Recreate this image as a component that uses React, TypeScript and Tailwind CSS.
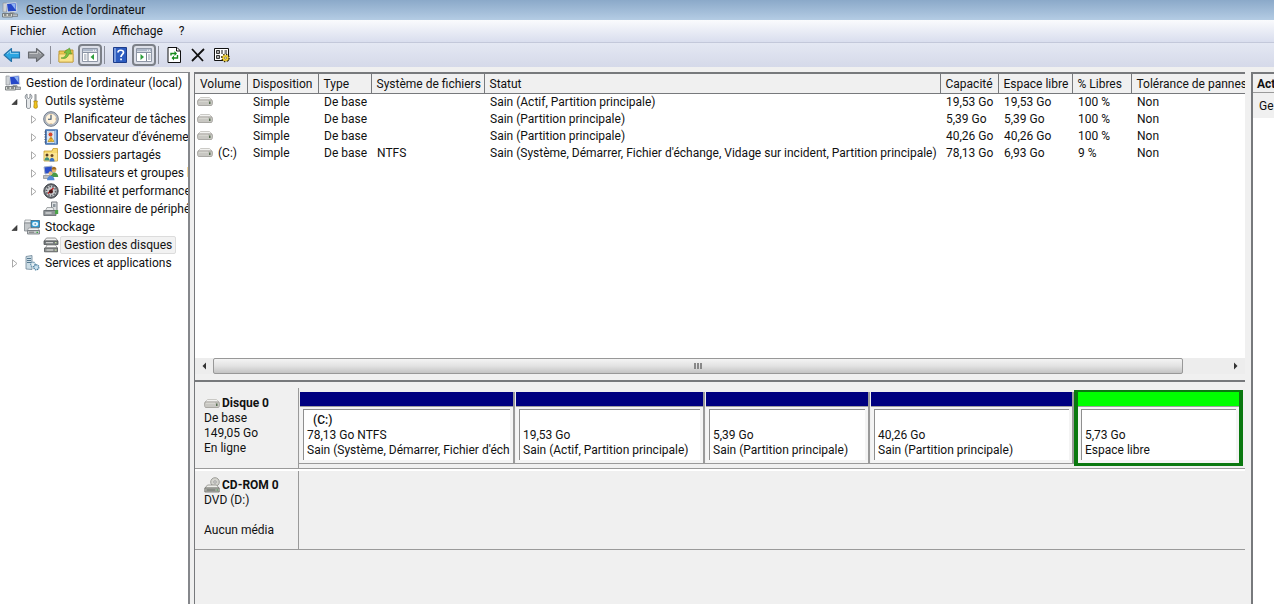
import type { ReactNode } from "react";

const volumes = [
  { name: "", fs: "", status: "Sain (Actif, Partition principale)", size: "19,53 Go", free: "19,53 Go", pct: "100 %" },
  { name: "", fs: "", status: "Sain (Partition principale)", size: "5,39 Go", free: "5,39 Go", pct: "100 %" },
  { name: "", fs: "", status: "Sain (Partition principale)", size: "40,26 Go", free: "40,26 Go", pct: "100 %" },
  {
    name: "(C:)",
    fs: "NTFS",
    status: "Sain (Système, Démarrer, Fichier d'échange, Vidage sur incident, Partition principale)",
    size: "78,13 Go",
    free: "6,93 Go",
    pct: "9 %",
  },
];

const columns = [
  { label: "Volume", width: "w-[52px]" },
  { label: "Disposition", width: "w-[71px]" },
  { label: "Type", width: "w-[53px]" },
  { label: "Système de fichiers", width: "w-[113px]" },
  { label: "Statut", width: "" },
  { label: "Capacité", width: "w-[58px]" },
  { label: "Espace libre", width: "w-[74px]" },
  { label: "% Libres", width: "w-[59px]" },
  { label: "Tolérance de pannes", width: "w-[114px]" },
];

const partitions = [
  { name: "(C:)", size: "78,13 Go NTFS", status: "Sain (Système, Démarrer, Fichier d'éch", grow: "grow-[213]" },
  { name: "", size: "19,53 Go", status: "Sain (Actif, Partition principale)", grow: "grow-[187]" },
  { name: "", size: "5,39 Go", status: "Sain (Partition principale)", grow: "grow-[162]" },
  { name: "", size: "40,26 Go", status: "Sain (Partition principale)", grow: "grow-[201]" },
];

function Icon({ children }: { children: ReactNode }) {
  return (
    <svg viewBox="0 0 16 16" className="size-4 shrink-0" aria-hidden="true">
      {children}
    </svg>
  );
}

function ComputerIcon() {
  return (
    <Icon>
      <path d="M1 1h3.500v9H1z" fill="#cfd3d6" stroke="#8d9399" strokeWidth=".7" />
      <path d="M4.500 1.500 14 .7l.8 8.600-9.300.7z" fill="#2648c8" stroke="#d5dae3" />
      <path d="m9 1.700 4.200-.3.500 6.500z" fill="#8fb4f4" />
      <path d="M8 10h4l1 2H7z" fill="#9aa0a6" />
      <path d="M.5 11.500h10V15H.5z" fill="#d9dcd6" stroke="#62676b" strokeWidth=".8" />
      <path d="M2 13h2.500M6 13h3" stroke="#3b3f42" />
      <path d="M10.500 12h5v2.500h-5z" fill="#b9bdc1" stroke="#70757a" strokeWidth=".7" />
    </Icon>
  );
}

function ToolsIcon() {
  return (
    <Icon>
      <path
        d="M3 1v3.500l1.500 1 1.500-1V1c2.300 1 2.600 4 .5 5.500V14c0 2-4 2-4 0V6.500C.5 5 1 2 3 1z"
        fill="#e4e7e9"
        stroke="#777e84"
        strokeWidth=".9"
      />
      <path d="M10.800 1.500h1.400V8h-1.400z" fill="#b4b9bd" stroke="#777" strokeWidth=".5" />
      <path d="M9.800 8h3.600l-.5 2 .5 4c0 1.800-3.600 1.800-3.600 0l.5-4z" fill="#f0c51d" stroke="#a87e08" strokeWidth=".7" />
    </Icon>
  );
}

function ClockIcon() {
  return (
    <Icon>
      <circle cx="8" cy="8" r="7.300" fill="#b9bfca" stroke="#6f7987" />
      <circle cx="8" cy="8" r="5.600" fill="#fff3dc" stroke="#8f969f" strokeWidth=".6" />
      <path d="M8 4v4.300H5" fill="none" stroke="#36506e" strokeWidth="1.100" />
      <path d="M8 3v.8M8 12.200v.8M12.200 8h.8" stroke="#c88d3e" strokeWidth=".8" />
    </Icon>
  );
}

function EventIcon() {
  return (
    <Icon>
      <path d="M2.500.8h12v14.400h-12z" fill="#5d8ecb" stroke="#436ba5" />
      <path d="M4 2h7.500v12H4z" fill="#dfe6f0" />
      <path d="M5 3h5M5 12.800h5" stroke="#a8b4c5" strokeWidth=".7" />
      <path d="M12.500 1.500v13" stroke="#a8c7ea" />
      <circle cx="7.500" cy="5.500" r="2" fill="#d8472f" />
      <path d="M8 7.500 11 12.500H5z" fill="#ffd531" stroke="#a98414" strokeWidth=".6" />
      <path d="M8 9v1.500M8 11.200v.6" stroke="#b03018" strokeWidth=".9" />
      <path d="M1.300 3h2M1.300 5.500h2M1.300 8h2M1.300 10.500h2M1.300 13h2" stroke="#4e5c70" strokeWidth=".8" />
    </Icon>
  );
}

function SharedIcon() {
  return (
    <Icon>
      <path d="M1 4h8l1-2.500h4.500V14H1z" fill="#f6d96f" stroke="#c59a2d" strokeWidth=".8" />
      <path d="M1.500 6h12.700v7.500H1.500z" fill="#fbe694" />
      <circle cx="4" cy="8" r="1.500" fill="#5a3c20" />
      <path d="M1.500 13.500c0-4.500 5-4.500 5 0z" fill="#3f8f7a" />
      <circle cx="9" cy="8.500" r="1.500" fill="#6b4824" />
      <path d="M6.500 14.500c0-5 5-5 5 0z" fill="#3b73c6" />
    </Icon>
  );
}

function UsersIcon() {
  return (
    <Icon>
      <path d="M1 2 9 1l1 7-8 1z" fill="#2c50c9" stroke="#a5b1ca" />
      <path d="M.5 10.500h7v3h-7z" fill="#bcc0c4" stroke="#777" strokeWidth=".6" />
      <circle cx="11" cy="5" r="2.400" fill="#e6b472" />
      <path d="M8.600 4.500c0-4 4.800-3.500 4.800 0z" fill="#a36d20" />
      <path d="M7.500 12c0-6 7.700-6 7.700 0z" fill="#4a9a46" />
      <circle cx="7.500" cy="8.300" r="2" fill="#e8bd84" />
      <path d="M4 15.200c0-6 7.500-6 7.500 0z" fill="#5188d6" />
    </Icon>
  );
}

function GaugeIcon() {
  return (
    <Icon>
      <circle cx="8" cy="8" r="7.200" fill="#5a5e64" stroke="#4a4e53" />
      <circle cx="8" cy="8" r="5.800" fill="#c9ccce" />
      <circle cx="8" cy="8" r="4.600" fill="none" stroke="#5c6066" strokeWidth="1.600" strokeDasharray="1.500 1.300" />
      <path d="m5 10.500 5.500-5.500" stroke="#c02020" strokeWidth="1.400" />
      <circle cx="8" cy="8.500" r="2" fill="#4b1718" />
    </Icon>
  );
}

function DeviceIcon() {
  return (
    <Icon>
      <path d="M8.500 1H14v9H8.500z" fill="#dadddf" stroke="#7a7f84" />
      <path d="M10 3h2.500v3H10z" fill="#8c959c" />
      <path d="M4 6.500h6l1 3H2.500z" fill="#e9ebec" stroke="#84898d" strokeWidth=".7" />
      <path d="M.8 9.500h12.200V14.500H.8z" fill="#8f9497" stroke="#5e6367" strokeWidth=".8" />
      <path d="M2.500 12h6" stroke="#f4f4f4" />
      <path d="M12 9h3.200v4H12z" fill="#4da34b" />
    </Icon>
  );
}

function StorageIcon() {
  return (
    <Icon>
      <path d="M1 1h6l1 3H.5z" fill="#edeff0" stroke="#888d91" strokeWidth=".7" />
      <path d="M.5 4h7v8h-7z" fill="#c3c7ca" stroke="#767c81" strokeWidth=".7" />
      <path d="M7 1.500h8.500v7H7z" fill="#2e9dd7" stroke="#3e647c" strokeWidth=".8" />
      <ellipse cx="11.200" cy="5" rx="3" ry="2.200" fill="#dff4fd" />
      <circle cx="11.200" cy="5" r=".8" fill="#287aa8" />
      <path d="M4.500 9h9.500l1.500 2.500h-12z" fill="#f1f2f3" stroke="#8a8f93" strokeWidth=".7" />
      <path d="M3.500 11.500h12v3.500h-12z" fill="#c5c8ca" stroke="#6f7478" strokeWidth=".8" />
      <path d="M5 13.200h5" stroke="#777" />
      <path d="M12.500 12.700H14v1.200h-1.500z" fill="#39a840" />
    </Icon>
  );
}

function DisksIcon() {
  return (
    <Icon>
      <path d="M3.500 1h9L15 4H1z" fill="#f2f2f1" stroke="#777" strokeWidth=".8" />
      <path d="M1 4h14v3.500H1z" fill="#777c7e" stroke="#505456" strokeWidth=".8" />
      <path d="M4 8h8.500L14.500 11h-12z" fill="#fafafa" stroke="#888" strokeWidth=".8" />
      <path d="M1.500 11h13v3.800h-13z" fill="#8f9392" stroke="#505456" strokeWidth=".8" />
      <path d="M3 5.700h7M3.500 13h6.500" stroke="#e2e2e0" />
      <path d="M12 5h1.500v1.200H12zM12 12.500h1.500v1.200H12z" fill="#c4dc9f" />
    </Icon>
  );
}

function ServicesIcon() {
  return (
    <Icon>
      <path d="m2 1.500 6-1v14l-6-.5z" fill="#cbdce5" stroke="#6e8798" strokeWidth=".8" />
      <path d="M3 3.500h4M3 5.500h4M3 7.500h4" stroke="#55788f" />
      <circle cx="9" cy="9.500" r="2.300" fill="#e8f2f7" stroke="#6f98b0" strokeWidth="1.400" strokeDasharray="1.300 .7" />
      <circle cx="12.300" cy="12.300" r="2.500" fill="#cbe2ef" stroke="#4a7d9d" strokeWidth="1.400" strokeDasharray="1.200 .7" />
    </Icon>
  );
}

function DriveIcon() {
  return (
    <svg viewBox="0 0 16 9" className="h-[9px] w-4 shrink-0" aria-hidden="true">
      <path d="M3.500.5h9L15 3H1z" fill="#f2f2f0" stroke="#bfbeb9" strokeWidth=".8" />
      <path d="M1.200 3h13.600c1 0 1 5-.3 5.500h-13C.2 8 .2 3 1.200 3z" fill="#c8c7c2" stroke="#9c9b95" strokeWidth=".8" />
      <path d="M2 4.200h9" stroke="#dddcd7" />
      <path d="M12 4.500h1.500V7H12z" fill="#566f50" />
    </svg>
  );
}

function CdIcon() {
  return (
    <Icon>
      <circle cx="11" cy="5" r="4.300" fill="#d4d4cf" stroke="#898983" strokeWidth=".8" />
      <circle cx="11" cy="5" r="1.200" fill="#fff" stroke="#777" strokeWidth=".7" />
      <path d="M3.500 8h9l2.500 3H1z" fill="#eeeeea" stroke="#8c8c87" strokeWidth=".8" />
      <path d="M.8 11h14.400v4H.8z" fill="#b3b4ae" stroke="#6d6e69" strokeWidth=".8" />
      <path d="M2.500 13h9" stroke="#5b605a" />
      <path d="M12.500 12.500H14v1h-1.500z" fill="#3f9445" />
    </Icon>
  );
}

function Arrow({ className, flip }: { className: string; flip?: boolean }) {
  return (
    <svg viewBox="0 0 18 16" className={className} aria-hidden="true">
      <path
        d={flip ? "M17 8 9.500 1.500V5H1.500v6h8v3.500z" : "M1 8l7.500-6.500V5h8v6h-8v3.500z"}
        strokeWidth="1.100"
        strokeLinejoin="round"
      />
      <path d={flip ? "M2.500 6.500h8V4l3.500 3" : "M15.500 6.500h-8V4L4 7"} fill="none" stroke="#fff" strokeOpacity=".45" />
    </svg>
  );
}

function PaneIcon({ right }: { right?: boolean }) {
  return (
    <Icon>
      <path d="M.5 1.500h15v13H.5z" fill="#fff" stroke="#8f97a6" />
      <path d="M1 2h14v2.500H1z" fill="#aeb8c9" />
      <path d="M1 5.500h14" stroke="#8993a4" />
      <path d="M11 3.300h1M13 3.300h1" stroke="#fff" />
      <path d={right ? "M10.500 6v8" : "M6 6v8"} stroke="#7b8494" />
      <path d={right ? "M12 8h2.500M12 10h2.500M12 12h2.500" : "M2 8h2.500M2 10h2.500M2 12h2.500"} stroke="#8b95a6" />
      <path d={right ? "m4.500 7 3.500 3-3.500 3z" : "m12 7-3.500 3 3.500 3z"} fill="#2f9e3e" />
    </Icon>
  );
}

function ToolButton({ label, pressed, children }: { label: string; pressed?: boolean; children: ReactNode }) {
  return (
    <button
      type="button"
      aria-label={label}
      aria-pressed={pressed}
      className={
        pressed
          ? "flex h-[22px] w-6 items-center justify-center rounded-[4px] border-2 border-[#7c8088] bg-[#dcdfe8]"
          : "flex h-[22px] w-6 items-center justify-center"
      }
    >
      {children}
    </button>
  );
}

function Separator() {
  return <div className="mr-[3px] ml-0.5 h-[18px] w-px shrink-0 bg-[#8a8d98]" />;
}

function Toolbar() {
  return (
    <div className="flex h-[25px] items-center border-t border-[#c3c8da] bg-linear-to-b from-[#e4e8f3] to-[#d5d9e9]">
      <ToolButton label="Précédent">
        <Arrow className="h-4 w-[18px] fill-[#2ba5e2] stroke-[#2572a8]" />
      </ToolButton>
      <ToolButton label="Suivant">
        <Arrow flip className="h-4 w-[18px] fill-[#92959a] stroke-[#676a6f]" />
      </ToolButton>
      <Separator />
      <ToolButton label="Dossier parent">
        <Icon>
          <path d="M1 4h6l1-1h7v12H1z" fill="#edc953" stroke="#b7912c" strokeWidth=".9" />
          <path d="M1 7h14v8H1z" fill="#fbe48c" stroke="#c49d35" strokeWidth=".7" />
          <path d="M3 11c3 0 5-2 5.500-5L6 5.500 11.500 1l2 6-2.500-.5C10 10.500 7 12.500 3 11z" fill="#7cc142" stroke="#4d9228" strokeWidth=".6" />
        </Icon>
      </ToolButton>
      <ToolButton label="Arborescence de la console" pressed>
        <PaneIcon />
      </ToolButton>
      <Separator />
      <ToolButton label="Aide">
        <Icon>
          <path d="M1.500.5h13v15h-13z" fill="#2d5cc0" stroke="#1c3c8b" />
          <path d="M2 1h2v14H2z" fill="#7799dc" />
          <path d="M6 5.500C6 2.500 11.500 2.500 11.500 5.500 11.500 7.500 9 7.500 9 10" fill="none" stroke="#fff" strokeWidth="1.700" />
          <path d="M8.200 11.500h1.700v1.800H8.200z" fill="#fff" />
        </Icon>
      </ToolButton>
      <ToolButton label="Volet Actions" pressed>
        <PaneIcon right />
      </ToolButton>
      <Separator />
      <ToolButton label="Actualiser">
        <Icon>
          <path d="M2 .5h9l3.500 3.500v11.500H2z" fill="#fff" stroke="#111" />
          <path d="M10.500.5V4h4" fill="none" stroke="#111" />
          <path d="M5 8.500V6.500h4M11.500 8v3h-4" fill="none" stroke="#158a1b" strokeWidth="1.400" />
          <path d="m8.500 4 2.500 2.500L8.500 9zM8 8.500v5L5.500 11z" fill="#158a1b" />
        </Icon>
      </ToolButton>
      <ToolButton label="Supprimer">
        <Icon>
          <path d="m2 2 11 12M14 2 2 14" fill="none" stroke="#111" strokeWidth="1.800" />
        </Icon>
      </ToolButton>
      <ToolButton label="Paramètres">
        <Icon>
          <path d="M.5 1.500h14v12H.5z" fill="#fff" stroke="#111" />
          <path d="M2.500 3.500h3v3h-3zM2.500 8.500h3v3h-3z" fill="#aaa" stroke="#111" strokeWidth=".8" />
          <path d="M7 4h2M7 6h2M10.500 4H13M10.500 6H13M7 10h1" stroke="#111" />
          <circle cx="11.500" cy="11" r="3.300" fill="#f3d23b" stroke="#3c3000" strokeWidth="2" strokeDasharray="1.300 1.300" />
          <circle cx="11.500" cy="11" r="2.900" fill="#f3d23b" />
          <circle cx="11.500" cy="11" r="1" fill="#fff" stroke="#333" strokeWidth=".5" />
        </Icon>
      </ToolButton>
    </div>
  );
}

function Expander({ open }: { open?: boolean }) {
  return (
    <button type="button" aria-label={open ? "Réduire" : "Développer"} className="flex w-[19px] shrink-0 justify-center">
      <svg viewBox="0 0 8 9" className="h-[9px] w-2" aria-hidden="true">
        {open ? (
          <path d="M6 2.500V7.500H1z" fill="#444" stroke="#222" strokeWidth=".6" />
        ) : (
          <path d="M1.500.8v7.400L6 4.500z" fill="#fff" stroke="#a0a0a0" strokeWidth=".9" />
        )}
      </svg>
    </button>
  );
}

type TreeRowProps = { icon: ReactNode; label: string; nested?: boolean; open?: boolean; leaf?: boolean; selected?: boolean };

function TreeRow({ icon, label, nested, open, leaf, selected }: TreeRowProps) {
  return (
    <li className={nested ? "flex h-[18px] items-center pl-6" : "flex h-[18px] items-center pl-[5px]"}>
      {leaf ? <span className="w-[19px] shrink-0" /> : <Expander open={open} />}
      {icon}
      <span
        className={
          selected
            ? "ml-px flex h-[18px] items-center rounded-[2px] border border-[#dcdcdc] bg-[#f2f2f2] px-[3px]"
            : "ml-[5px]"
        }
      >
        {label}
      </span>
    </li>
  );
}

function ConsoleTree() {
  return (
    <nav className="w-[190px] shrink-0 overflow-hidden border-t border-r-2 border-[#85878b] bg-white pt-px whitespace-nowrap">
      <div className="flex h-[18px] items-center gap-[5px] pl-[5px]">
        <ComputerIcon />
        Gestion de l'ordinateur (local)
      </div>
      <ul>
        <TreeRow icon={<ToolsIcon />} label="Outils système" open />
        <TreeRow nested icon={<ClockIcon />} label="Planificateur de tâches" />
        <TreeRow nested icon={<EventIcon />} label="Observateur d'événeme" />
        <TreeRow nested icon={<SharedIcon />} label="Dossiers partagés" />
        <TreeRow nested icon={<UsersIcon />} label="Utilisateurs et groupes l" />
        <TreeRow nested icon={<GaugeIcon />} label="Fiabilité et performance" />
        <TreeRow nested leaf icon={<DeviceIcon />} label="Gestionnaire de périphé" />
        <TreeRow icon={<StorageIcon />} label="Stockage" open />
        <TreeRow nested leaf selected icon={<DisksIcon />} label="Gestion des disques" />
        <TreeRow icon={<ServicesIcon />} label="Services et applications" />
      </ul>
    </nav>
  );
}

function VolumeList() {
  return (
    <section className="flex h-[286px] flex-col overflow-hidden border-t-2 border-l border-[#77797c] bg-white">
      <table className="w-full table-fixed border-collapse text-left whitespace-nowrap">
        <thead>
          <tr className="h-[19px] bg-[#f0f0f0]">
            {columns.map((col, i) => (
              <th
                key={col.label}
                scope="col"
                className={`${col.width} border-b border-[#77797c] p-0 pt-0.5 pl-[5px] font-normal ${
                  i < columns.length - 1 ? "border-r" : ""
                }`}
              >
                {col.label}
              </th>
            ))}
          </tr>
        </thead>
        <tbody>
          {volumes.map((v, i) => (
            <tr key={i} className="h-[17px]">
              <td className="p-0 pl-0.5">
                <div className="flex items-center gap-[5px]">
                  <DriveIcon />
                  {v.name}
                </div>
              </td>
              <td className="p-0 pl-1.5">Simple</td>
              <td className="p-0 pl-1.5">De base</td>
              <td className="p-0 pl-1.5">{v.fs}</td>
              <td className="p-0 pl-1.5">{v.status}</td>
              <td className="p-0 pl-1.5">{v.size}</td>
              <td className="p-0 pl-1.5">{v.free}</td>
              <td className="p-0 pl-1.5">{v.pct}</td>
              <td className="p-0 pl-1.5">Non</td>
            </tr>
          ))}
        </tbody>
      </table>
    </section>
  );
}

function ScrollBar() {
  return (
    <div className="flex h-4 border-l border-[#77797c] bg-[#ededed]">
      <button type="button" aria-label="Défiler à gauche" className="flex w-[18px] items-center justify-center">
        <svg viewBox="0 0 4 8" className="h-2 w-1" aria-hidden="true">
          <path d="M4 .5v7L.5 4z" fill="#333" />
        </svg>
      </button>
      <div className="flex flex-1">
        <div className="flex grow-[971] items-center justify-center gap-px rounded-[2px] border border-[#989898] bg-linear-to-b from-[#f4f4f4] via-[#e2e2e2] to-[#c4c4c4]">
          <span className="h-1.5 w-0.5 bg-[#888]" />
          <span className="h-1.5 w-0.5 bg-[#888]" />
          <span className="h-1.5 w-0.5 bg-[#888]" />
        </div>
        <div className="grow-[44]" />
      </div>
      <button type="button" aria-label="Défiler à droite" className="flex w-[18px] items-center justify-center">
        <svg viewBox="0 0 4 8" className="h-2 w-1" aria-hidden="true">
          <path d="M0 .5v7L3.500 4z" fill="#333" />
        </svg>
      </button>
    </div>
  );
}

type PartitionProps = { name: string; size: string; status: string; grow: string; free?: boolean };

function Partition({ name, size, status, grow, free }: PartitionProps) {
  return (
    <div
      className={`${grow} flex min-w-0 basis-0 flex-col ${
        free
          ? "-mt-0.5 -mb-0.5 border-x-4 border-t-2 border-b-[3px] border-[#0a780f]"
          : "border-r-2 border-b border-[#9a9a9a] pl-px"
      }`}
    >
      <div className={free ? "h-3.5 bg-[#00ff00]" : "h-3.5 bg-[#000080]"} />
      <div className="flex-1 border-t border-[#a0a0a0] bg-[#f4f4f4] p-[3px] pt-0.5">
        <div className="h-full overflow-hidden border-t border-l border-[#8f8f8f] bg-white pt-[3px] pl-[3px] leading-[15px] whitespace-nowrap">
          <div className="h-[15px] pl-1.5 font-medium">{name}</div>
          <div>{size}</div>
          <div>{status}</div>
        </div>
      </div>
    </div>
  );
}

function DiskMap() {
  return (
    <section className="flex-1 border-l border-[#77797c] bg-[#f0f0f0] pt-1.5">
      <div className="flex h-[81px]">
        <div className="w-[104px] shrink-0 border-r border-b border-[#9a9a9a] pt-2 pl-[9px] leading-[15px]">
          <div className="flex items-center gap-0.5 font-bold">
            <DriveIcon />
            Disque 0
          </div>
          <div>De base</div>
          <div>149,05 Go</div>
          <div>En ligne</div>
        </div>
        <div className="flex min-w-0 flex-1 border-b border-[#9a9a9a] pt-1 pr-0.5 pb-1">
          {partitions.map((p) => (
            <Partition key={p.size} {...p} />
          ))}
          <Partition name="" size="5,73 Go" status="Espace libre" grow="grow-[161]" free />
        </div>
      </div>
      <div className="flex h-[81px] border-t-2 border-white">
        <div className="w-[104px] shrink-0 border-r border-b border-[#9a9a9a] pt-[7px] pl-[9px] leading-[15px]">
          <div className="flex h-[15px] items-end gap-0.5 font-bold">
            <CdIcon />
            CD-ROM 0
          </div>
          <div>DVD (D:)</div>
          <div className="mt-[15px]">Aucun média</div>
        </div>
        <div className="flex-1 border-b border-[#9a9a9a]" />
      </div>
    </section>
  );
}

function ActionsPane() {
  return (
    <aside className="w-[23px] shrink-0 overflow-hidden border-t-2 border-l-2 border-[#77797c] bg-white whitespace-nowrap">
      <h2 className="h-[19px] border-b border-[#9a9a9a] bg-[#f0f0f0] pt-0.5 pl-1 font-bold">Act</h2>
      <div className="flex h-[25px] items-center bg-[#f0f0f0] pl-1.5">Ge</div>
    </aside>
  );
}

export default function App() {
  return (
    <div className="flex h-screen flex-col overflow-hidden bg-[#f0f0f0] font-[Roboto,'Open_Sans',sans-serif] text-[12px] leading-4 text-[#111]">
      <header className="flex h-5 items-center gap-2 bg-linear-to-b from-[#8ba9c9] to-[#b4cce4] pl-0.5">
        <ComputerIcon />
        <h1>Gestion de l'ordinateur</h1>
      </header>
      <div className="flex h-[22px] items-center gap-4 bg-linear-to-b from-[#fafbfd] to-[#d9deee] pl-2.5">
        <button type="button">Fichier</button>
        <button type="button">Action</button>
        <button type="button">Affichage</button>
        <button type="button">?</button>
      </div>
      <Toolbar />
      <main className="flex min-h-0 flex-1 pt-[5px]">
        <ConsoleTree />
        <div className="ml-1 flex min-w-0 flex-1 flex-col">
          <VolumeList />
          <ScrollBar />
          <div className="h-2 border-b-2 border-l border-[#77797c]" />
          <DiskMap />
        </div>
        <div className="ml-1.5 flex">
          <ActionsPane />
        </div>
      </main>
    </div>
  );
}
